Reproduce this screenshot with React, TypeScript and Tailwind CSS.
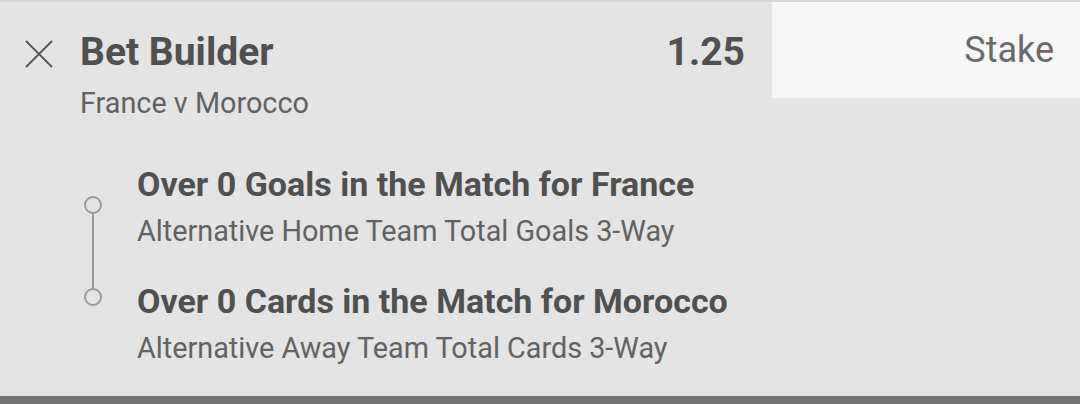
const legs = [
  { title: 'Over 0 Goals in the Match for France', market: 'Alternative Home Team Total Goals 3-Way' },
  { title: 'Over 0 Cards in the Match for Morocco', market: 'Alternative Away Team Total Cards 3-Way' },
];

export default function App() {
  return (
    <div
      className="w-[1080px] h-[404px] bg-[#e4e4e4] border-t-2 border-b-8 border-t-[#d4d4d4] border-b-[#737373] text-[#505050] overflow-hidden"
      style={{ fontFamily: 'Roboto, "Noto Sans", sans-serif' }}
    >
      <div className="flex">
        <div className="flex-1 flex items-start pl-[25px] pr-[27px]">
          <svg width="28" height="28" viewBox="0 0 28 28" className="mt-[38px] shrink-0">
            <path d="M1 1 L27 27 M27 1 L1 27" stroke="#555" strokeWidth="1.8" />
          </svg>
          <div className="flex-1 ml-[27px] pt-[31px]">
            <div className="flex justify-between">
              <h1 className="text-[39px] leading-none font-bold">Bet Builder</h1>
              <span className="text-[39px] leading-none font-bold">1.25</span>
            </div>
            <p className="mt-[17px] text-[28.8px] leading-none text-[#626262]">France v Morocco</p>
          </div>
        </div>
        <div className="w-[308px] h-[96px] bg-[#f7f7f7] flex items-center justify-end pr-[26px]">
          <span className="text-[36px] leading-none text-[#6a6a6a]">Stake</span>
        </div>
      </div>

      <div className="flex pl-[83px] mt-[49px]">
        <svg width="20" height="112" viewBox="0 0 20 112" className="mt-[28px] shrink-0">
          <circle cx="10" cy="10" r="8" fill="none" stroke="#9a9a9a" strokeWidth="2" />
          <line x1="10" y1="18" x2="10" y2="94" stroke="#9a9a9a" strokeWidth="2" />
          <circle cx="10" cy="102" r="8" fill="none" stroke="#9a9a9a" strokeWidth="2" />
        </svg>
        <div className="ml-[34px] flex flex-col gap-[38px]">
          {legs.map((l) => (
            <div key={l.title}>
              <p className="text-[34px] leading-none font-bold">{l.title}</p>
              <p className="mt-[16px] text-[28.8px] leading-none text-[#626262]">{l.market}</p>
            </div>
          ))}
        </div>
      </div>
    </div>
  );
}
